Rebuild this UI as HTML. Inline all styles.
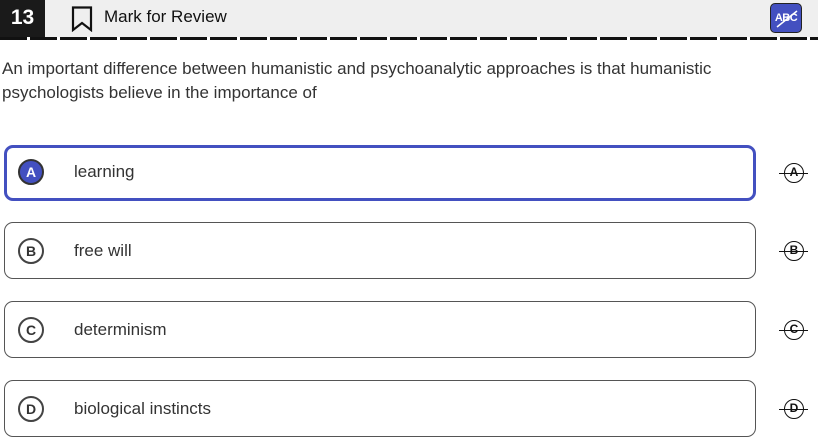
<!DOCTYPE html>
<html><head><style>
body{margin:0;width:818px;height:442px;overflow:hidden;background:#fff;font-family:"Liberation Sans",Arial,sans-serif;color:#333;position:relative}
.top{position:absolute;left:0;top:0;width:818px;height:37px;background:#efefef}
.num{position:absolute;left:0;top:0;width:45px;height:37px;background:#1a1a1a;color:#fff;font-weight:bold;font-size:21px;line-height:35px;text-align:center}
.dash{position:absolute;left:0;top:37px;width:818px;height:3px;background:repeating-linear-gradient(90deg,#111 0 27px,transparent 27px 30px)}
.mark{position:absolute;left:104px;top:7px;font-size:17px;color:#111}
.abc{position:absolute;left:770px;top:3px;width:32px;height:30px;background:#4350c0;border:1px solid #222;border-radius:5px;box-sizing:border-box;color:#fff;font-weight:bold;font-size:11px;line-height:28px;text-align:center;letter-spacing:-0.5px}
.q{position:absolute;left:2px;top:57px;font-size:17px;line-height:24px;color:#333;width:750px}
.opt{position:absolute;left:4px;width:752px;height:57px;border:1px solid #555;border-radius:9px;box-sizing:border-box}
.opt.sel{border:3px solid #4350c0}
.c{position:absolute;left:18px;width:26px;height:26px;border:2px solid #444;border-radius:50%;box-sizing:border-box;font-weight:bold;font-size:14px;text-align:center;line-height:22px;color:#333}
.c.s{background:#4350c0;color:#fff;border-color:#333}
.t{position:absolute;left:74px;font-size:17px;color:#333}
.x{position:absolute;left:784px;width:20px;height:20px;border:1.5px solid #111;border-radius:50%;box-sizing:border-box;font-weight:bold;font-size:12px;text-align:center;line-height:17px;color:#111}
.x:after{content:"";position:absolute;left:-6px;top:8.5px;width:29px;height:1.5px;background:#111}
</style></head><body>
<div class="top"></div>
<div class="num">13</div>
<svg style="position:absolute;left:71px;top:6px" width="22" height="26" viewBox="0 0 22 26"><path d="M2 1.5H20V24L11 17L2 24Z" fill="none" stroke="#111" stroke-width="2.2" stroke-linejoin="miter"/></svg>
<div class="mark">Mark for Review</div>
<div class="abc">ABC<svg style="position:absolute;left:4px;top:5px" width="24" height="20"><line x1="2" y1="18" x2="22" y2="2" stroke="#fff" stroke-width="1.5"/></svg></div>
<div class="dash"></div>
<div class="q">An important difference between humanistic and psychoanalytic approaches is that humanistic psychologists believe in the importance of</div>

<div class="opt sel" style="top:145px;height:56px"></div>
<div class="c s" style="top:159px">A</div><div class="t" style="top:162px">learning</div>
<div class="x" style="top:163px">A</div>

<div class="opt" style="top:222px"></div>
<div class="c" style="top:238px">B</div><div class="t" style="top:241px">free will</div>
<div class="x" style="top:241px">B</div>

<div class="opt" style="top:301px"></div>
<div class="c" style="top:317px">C</div><div class="t" style="top:320px">determinism</div>
<div class="x" style="top:320px">C</div>

<div class="opt" style="top:380px"></div>
<div class="c" style="top:396px">D</div><div class="t" style="top:399px">biological instincts</div>
<div class="x" style="top:399px">D</div>
</body></html>
